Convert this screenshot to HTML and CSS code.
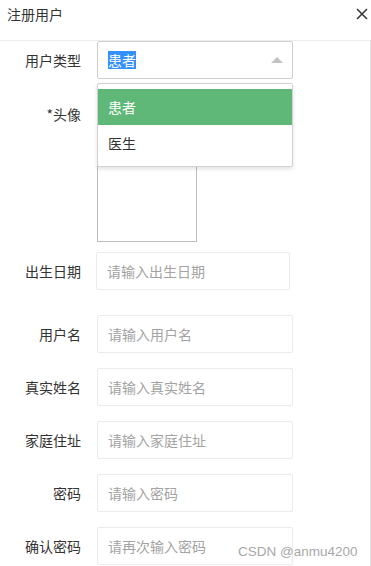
FILE: index.html
```html
<!DOCTYPE html>
<html lang="zh">
<head>
<meta charset="utf-8">
<title>注册用户</title>
<link rel="stylesheet" href="styles.css">
</head>
<body>
<div class="page">
  <div class="header">
    <span class="title">注册用户</span>
    <svg class="close" width="12" height="12" viewBox="0 0 12 12"><path d="M1 1L11 11M11 1L1 11" stroke="#333" stroke-width="1.5" fill="none"/></svg>
  </div>
  <div class="form">
    <div class="row row-type">
      <label class="label">用户类型</label>
      <div class="select-wrap">
        <div class="select">
          <span class="sel-text">患者</span>
          <span class="edge"></span>
        </div>
        <div class="dropdown">
          <div class="opt active">患者</div>
          <div class="opt">医生</div>
        </div>
      </div>
    </div>
    <div class="row row-avatar">
      <label class="label">*头像</label>
      <div class="upload"></div>
    </div>
    <div class="row row-birth">
      <label class="label">出生日期</label>
      <input class="input input-birth" placeholder="请输入出生日期">
    </div>
    <div class="row row-first">
      <label class="label">用户名</label>
      <input class="input" placeholder="请输入用户名">
    </div>
    <div class="row">
      <label class="label">真实姓名</label>
      <input class="input" placeholder="请输入真实姓名">
    </div>
    <div class="row">
      <label class="label">家庭住址</label>
      <input class="input" placeholder="请输入家庭住址">
    </div>
    <div class="row">
      <label class="label">密码</label>
      <input class="input" placeholder="请输入密码">
    </div>
    <div class="row">
      <label class="label">确认密码</label>
      <input class="input" placeholder="请再次输入密码">
    </div>
  </div>
  <div class="watermark">CSDN @anmu4200</div>
</div>
</body>
</html>
```
FILE: styles.css
```css
* { box-sizing: border-box; }
html, body { margin: 0; padding: 0; background: #fff; }
body {
  font-family: "Noto Sans CJK SC", "Noto Sans", sans-serif;
  font-size: 14px;
  color: #333;
}
.page {
  position: relative;
  width: 371px;
  height: 566px;
  overflow: hidden;
}
.header {
  height: 40px;
  display: flex;
  justify-content: space-between;
  align-items: flex-start;
  padding: 5px 3px 0 7px;
}
.title {
  font-size: 14px;
  line-height: 18px;
  color: #333;
}
.close {
  margin-top: 3px;
}
.form {
  border-top: 1px solid #ececec;
  border-right: 1px solid #e2e2e2;
  height: 526px;
  width: 371px;
}
.row {
  display: flex;
  align-items: flex-start;
  margin-top: 15px;
}
.row-type { margin-top: 0; }
.row-avatar { margin-top: 16px; }
.row-birth { margin-top: 10px; }
.row-first { margin-top: 25px; }
.label {
  width: 81px;
  margin-right: 16px;
  text-align: right;
  line-height: 38px;
  font-size: 14px;
  color: #333;
  flex-shrink: 0;
}
.select-wrap {
  position: relative;
  width: 196px;
}
.select {
  height: 38px;
  border: 1px solid #cfcfcf;
  border-radius: 2px;
  display: flex;
  align-items: center;
  justify-content: space-between;
  padding: 0 9px 0 10px;
  background: #fff;
}
.sel-text {
  background: #3390ff;
  color: #fff;
  line-height: 18px;
  font-size: 14px;
}
.edge {
  width: 0;
  height: 0;
  border-left: 6px solid transparent;
  border-right: 6px solid transparent;
  border-bottom: 6px solid #c2c2c2;
}
.dropdown {
  position: absolute;
  top: 42px;
  left: 0;
  width: 196px;
  background: #fff;
  border: 1px solid #d2d2d2;
  border-radius: 2px;
  padding: 5px 0;
  box-shadow: 0 2px 4px rgba(0, 0, 0, 0.12);
  z-index: 10;
}
.opt {
  line-height: 36px;
  height: 36px;
  padding: 0 10px;
  color: #333;
  font-size: 14px;
}
.opt.active {
  background: #5fb878;
  color: #fff;
}
.upload {
  width: 100px;
  height: 147px;
  border: 1px solid #bdbdbd;
  background: #fff;
}
.input {
  display: block;
  width: 196px;
  height: 38px;
  border: 1px solid #ebebeb;
  border-radius: 2px;
  padding: 0 10px;
  font-family: "Noto Sans CJK SC", "Noto Sans", sans-serif;
  font-size: 14px;
  color: #333;
  background: #fff;
  outline: none;
}
.input::placeholder { color: #a3a3a3; }
.input-birth {
  width: 194px;
  margin-left: -1px;
}
.watermark {
  position: absolute;
  left: 238px;
  top: 544px;
  font-family: "Liberation Sans", Arial, sans-serif;
  font-size: 13.5px;
  line-height: 16px;
  color: #a8a8a8;
  white-space: nowrap;
}
```
